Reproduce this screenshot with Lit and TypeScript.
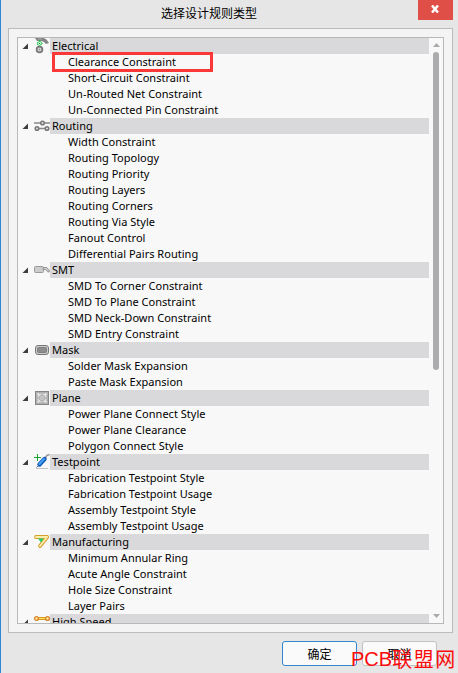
import { LitElement, html, css, svg } from "lit";
import { customElement } from "lit/decorators.js";

interface Group {
  name: string;
  icon: unknown;
  items: string[];
}

const groups: Group[] = [
  {
    name: "Electrical",
    icon: svg`<path d="M1 0H10Q13 1 15 5L12 6Q10 3 7 3H3Z" fill="#858585"/><path d="M4 1H8" stroke="#aaa"/>
      <path d="M5.5 3L8 5.5L5.5 8L3 5.5Z" fill="#e8fff0" stroke="#24c450" stroke-width="1.3" stroke-dasharray="1.5 .7"/><rect x="5" y="5" width="1" height="1" fill="#168c36"/>
      <circle cx="5.5" cy="11.5" r="2.9" fill="#ddd" stroke="#777" stroke-width="1.7"/><circle cx="5.5" cy="11.5" r="1" fill="#999"/>`,
    items: ["Clearance Constraint", "Short-Circuit Constraint", "Un-Routed Net Constraint", "Un-Connected Pin Constraint"],
  },
  {
    name: "Routing",
    icon: svg`<path d="M0 5H16M1 10.5H14" stroke="#888" stroke-width="1.3"/><g fill="#ddd" stroke="#777" stroke-width="1.5"><circle cx="8.5" cy="5" r="1.8"/><circle cx="3" cy="10.5" r="1.8"/><circle cx="13" cy="10.5" r="1.8"/></g>`,
    items: ["Width Constraint", "Routing Topology", "Routing Priority", "Routing Layers", "Routing Corners", "Routing Via Style", "Fanout Control", "Differential Pairs Routing"],
  },
  {
    name: "SMT",
    icon: svg`<rect x=".5" y="4.5" width="9" height="6" rx="1" fill="#ccc" stroke="#999"/><path d="M10 6.5H12L14.5 9" fill="none" stroke="#999" stroke-width="3" stroke-linecap="round"/><path d="M10 6.5H12L14.5 9" fill="none" stroke="#d0d0d0" stroke-width="1.2"/>`,
    items: ["SMD To Corner Constraint", "SMD To Plane Constraint", "SMD Neck-Down Constraint", "SMD Entry Constraint"],
  },
  {
    name: "Mask",
    icon: svg`<rect x="1.5" y="3.5" width="13" height="9" rx="2.5" fill="#ccc" stroke="#777"/><rect x="3.5" y="5.5" width="9" height="5" rx="1" fill="#8c8c8c" stroke="#7f7f7f"/>`,
    items: ["Solder Mask Expansion", "Paste Mask Expansion"],
  },
  {
    name: "Plane",
    icon: svg`<rect x="1.5" y="1.5" width="13" height="13" fill="#b0b0b0" stroke="#858585"/><circle cx="8" cy="8" r="4" fill="none" stroke="#dedede" stroke-width="1.5"/><circle cx="8" cy="8" r="2.4" fill="#c4c4c4"/><path d="M3.5 3.5L5.5 5.5M12.5 3.5L10.5 5.5M3.5 12.5L5.5 10.5M12.5 12.5L10.5 10.5" stroke="#e4e4e4" stroke-width="2"/><path d="M8 3V5M8 11V13M3 8H5M11 8H13" stroke="#a4a4a4"/>`,
    items: ["Power Plane Connect Style", "Power Plane Clearance", "Polygon Connect Style"],
  },
  {
    name: "Testpoint",
    icon: svg`<path d="M2 14.5H14" stroke="#c4c4c4"/><path d="M11 4L13 1.5L15.5 .5" fill="none" stroke="#999" stroke-width="1.6"/><path d="M2.5 13.5L5 11" stroke="#777"/><path d="M5.5 10.5L10.5 5" stroke="#145bb8" stroke-width="4.4" stroke-linecap="round"/><path d="M5.5 10L10 5" stroke="#45a0f5" stroke-width="2" stroke-linecap="round"/><path d="M0 3.5H7M3.5 0V7" stroke="#18a52e"/>`,
    items: ["Fabrication Testpoint Style", "Fabrication Testpoint Usage", "Assembly Testpoint Style", "Assembly Testpoint Usage"],
  },
  {
    name: "Manufacturing",
    icon: svg`<path d="M2 3H13.2L6 12" fill="none" stroke="#d4a02c" stroke-width="3.8" stroke-linecap="round" stroke-linejoin="round"/><path d="M2 3H13.2L6 12" fill="none" stroke="#ffedae" stroke-width="1.8" stroke-linecap="round" stroke-linejoin="round"/><path d="M4 4.5H9.5L7 8.5Z" fill="#23cf72"/>`,
    items: ["Minimum Annular Ring", "Acute Angle Constraint", "Hole Size Constraint", "Layer Pairs"],
  },
  {
    name: "High Speed",
    icon: svg`<path d="M3 4.5H13" stroke="#d99b1c" stroke-width="3"/><path d="M3 4.5H13" stroke="#ffe36b"/><g fill="#fff0a0" stroke="#d8812c" stroke-width="1.4"><circle cx="2.5" cy="4.5" r="1.9"/><circle cx="13.5" cy="4.5" r="1.9"/></g>`,
    items: [],
  },
];

@customElement("app-root")
export class AppRoot extends LitElement {
  static styles = css`
    :host { display: block; }
    * { box-sizing: border-box; }
    .window {
      position: relative; width: 458px; height: 673px; overflow: hidden;
      display: flex; flex-direction: column; background: #e6e6e6;
      border-left: 1px solid #2f85d6; color: #000;
      font: 11px/16px "Noto Sans", "Noto Sans CJK SC", sans-serif;
    }
    .titlebar { height: 28px; flex: none; display: flex; }
    .title { flex: 1; padding: 4px 0 0 160px; font: 12px/18px "Noto Sans CJK SC", sans-serif; }
    .close { width: 35px; height: 20px; margin-right: 5px; background: #e04f47; display: flex; justify-content: center; padding: 5px 1px 0 0; }
    .close svg { width: 8px; height: 8px; }
    .panel { margin: 0 5px 0 7px; height: 605px; flex: none; border: 1px solid #bbb; background: #f4f4f4; padding: 8px; }
    .list { height: 587px; border: 1px solid #b8b8b8; background: #f8f8f8; display: flex; overflow: hidden; }
    .tree { width: 411px; overflow: hidden; letter-spacing: 0.02px; white-space: nowrap; }
    .head { display: flex; height: 16px; }
    .toggle { width: 16px; height: 16px; flex: none; }
    .icon { width: 16px; height: 16px; flex: none; overflow: visible; }
    .name { flex: 1; background: #d9d9db; padding-left: 2px; }
    .item { height: 16px; padding-left: 50px; }
    .scroll { width: 14px; display: flex; flex-direction: column; align-items: center; }
    .arrow { width: 7px; height: 4px; margin-top: 5px; fill: #aaa; }
    .thumb { width: 6px; height: 318px; margin-top: 5px; border-radius: 3px; background: #acacae; }
    .down { margin-top: auto; margin-bottom: 5px; }
    .mark { position: absolute; left: 51px; top: 52px; width: 161px; height: 20px; border: 3px solid #fb3838; }
    .footer { display: flex; gap: 5px; padding: 8px 0 0 281px; }
    .btn { width: 75px; height: 25px; border: 1px solid #c2c2c2; border-radius: 3px; background: #fafafa; font: 12px/23px "Noto Sans CJK SC", sans-serif; padding: 0; text-align: center; color: #000; }
    .primary { border-color: #3585cc; }
    .watermark { position: absolute; left: 350px; top: 645px; font: 20px/28px "Liberation Sans", "Noto Sans CJK SC", sans-serif; color: #fa0a0a; white-space: nowrap; display: flex; }
    .cjk { font-family: "Noto Sans CJK SC", sans-serif; font-size: 20px; letter-spacing: 1.6px; }
  `;

  render() {
    return html`<div class="window">
      <div class="titlebar">
        <div class="title">选择设计规则类型</div>
        <div class="close"><svg viewBox="0 0 8 8"><path d="M1 .5L7 7.5M7 .5L1 7.5" stroke="#fff" stroke-width="2.5"/></svg></div>
      </div>
      <div class="panel"><div class="list">
        <div class="tree">
          ${groups.map((g) => html`
            <div class="head">
              <svg class="toggle" viewBox="0 0 16 16"><path d="M10 5.5V11H4.5Z" fill="#3c3c3c"/></svg>
              <svg class="icon" viewBox="0 0 16 16">${g.icon}</svg>
              <div class="name">${g.name}</div>
            </div>
            ${g.items.map((label) => html`<div class="item">${label}</div>`)}`)}
        </div>
        <div class="scroll">
          <svg class="arrow" viewBox="0 0 7 4"><path d="M3.5 0L7 4H0Z"/></svg>
          <div class="thumb"></div>
          <svg class="arrow down" viewBox="0 0 7 4"><path d="M0 0H7L3.5 4Z"/></svg>
        </div>
      </div></div>
      <div class="footer">
        <button class="btn primary">确定</button>
        <button class="btn">取消</button>
      </div>
      <div class="mark"></div>
      <div class="watermark"><span>PCB</span><span class="cjk">联盟网</span></div>
    </div>`;
  }
}
